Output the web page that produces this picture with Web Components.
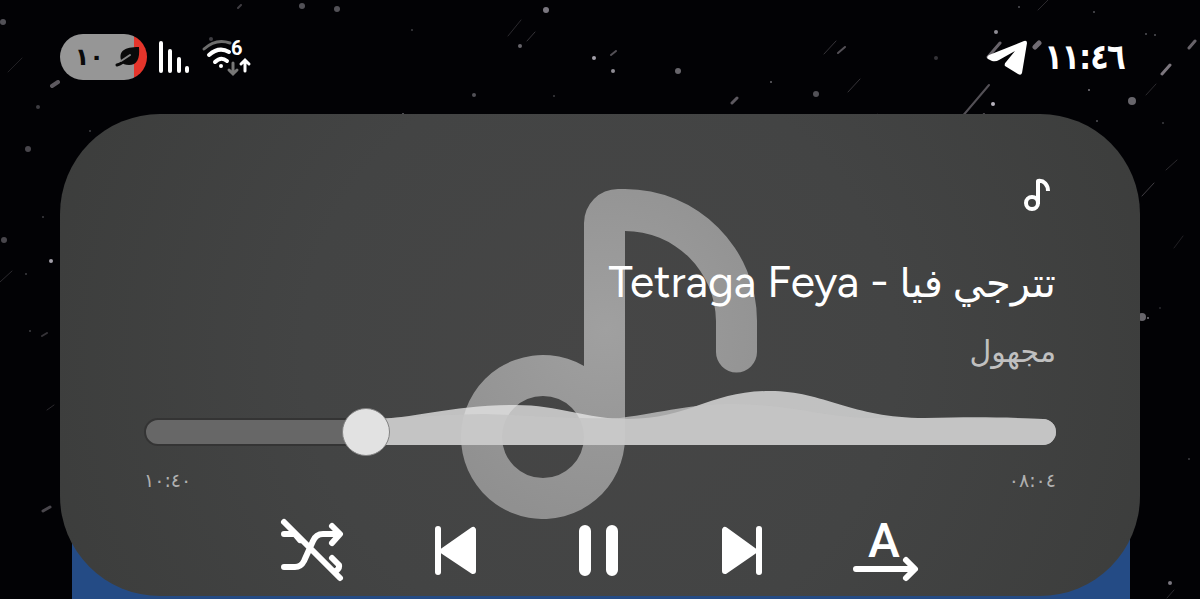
<!DOCTYPE html>
<html lang="ar" dir="rtl">
<head>
<meta charset="utf-8">
<meta name="viewport" content="width=device-width, initial-scale=1">
<title>مشغل الموسيقى</title>
<style>
  body { margin: 0; background: #020205; color: #fff; font-family: Figtree, Roboto, "Noto Sans", "DejaVu Sans", sans-serif; }
</style>
</head>
<body>
<phone-screen>
  <status-bar slot="status" time="١١:٤٦" battery="١٠"></status-bar>
  <media-card>
    <span slot="title"><bdi lang="ar" style="font-size:40px">تترجي فيا</bdi> - <bdi lang="en">Tetraga Feya</bdi></span>
    <span slot="artist">مجهول</span>
    <seek-bar slot="seek" value="484" max="640" elapsed="٠٨:٠٤" total="١٠:٤٠"></seek-bar>
    <transport-controls slot="controls"></transport-controls>
  </media-card>
</phone-screen>

<script>
function define(name, render) {
  customElements.define(name, class extends HTMLElement {
    connectedCallback() {
      if (this.shadowRoot) return;
      this.attachShadow({ mode: "open" }).innerHTML = render(this);
    }
  });
}

const NOTE = "M123 34A34 34 0 0 1 157 0H164A132 132 0 0 1 296 132V163A20.500 20.500 0 0 1 255 163V132A91 91 0 0 0 164 42V248A82 82 0 1 1 123 177ZM82 207A41 41 0 1 0 82 289A41 41 0 1 0 82 207Z";

/* Night sky: dots are [x, y, radius, opacity], trails are [x1, y1, x2, y2, opacity]. */
const DOTS = [[3,22,3,.4],[302,6,3,.4],[337,9,3,.4],[546,10,3,.6],[520,46,2,.5],[594,58,2,.8],[38,107,2,.3],[28,149,3,.35],[4,240,3,.35],[51,261,2,.8],[474,95,2,.4],[403,114,1,.5],[211,39,2,.3],[613,71,2,.7],[678,71,3,.5],[816,94,3,.4],[771,82,1,.5],[936,58,2,.25],[996,32,2,.7],[1019,7,1,.4],[1094,12,1,.4],[1146,34,1,.4],[1155,35,1,.4],[1132,101,4,.5],[993,104,2,.9],[1089,90,1,.6],[1097,121,1,.4],[1163,123,1,.3],[1142,317,4,.5],[1148,318,1,.6],[1170,583,2,.6],[30,331,1,.3],[1189,459,1,.3],[1160,308,1,.2],[90,131,1,.3],[43,217,1,.3],[26,274,1,.3],[412,30,1,.3],[554,96,1,.3]];
/* Trails carry an optional sixth value, the stroke width. */
const TRAILS = [[52,86,58,82,.45,4],[238,8,241,5,.3,2],[460,119,463,115,.35],[170,131,173,128,.3],[508,36,521,20,.2],[527,41,535,32,.25],[594,131,600,124,.4],[0,282,12,271,.2],[8,72,22,58,.15],[611,55,616,51,.4,2],[732,103,737,98,.45,3],[730,131,737,122,.35],[824,54,836,41,.25],[838,53,845,47,.4,2],[848,92,860,79,.25],[870,122,877,114,.2],[988,57,1000,43,.5,3],[1035,47,1039,43,.55,5],[961,118,989,85,.4,2],[968,131,984,114,.4,2],[1189,48,1195,41,.5,3],[1162,74,1170,65,.6,3],[1146,95,1156,84,.2],[1142,196,1154,183,.3],[1166,170,1177,160,.2],[1038,10,1048,0,.2],[43,511,50,507,.35,3],[47,410,54,405,.2],[42,336,47,333,.25,2],[1167,598,1174,590,.2],[1174,248,1183,236,.15]];

define("star-field", () => `
  <style>
    :host { display: block; overflow: hidden; }
    svg { display: block; width: 100%; height: 100%; }
  </style>
  <svg viewBox="0 0 1200 599" preserveAspectRatio="xMidYMin slice" aria-hidden="true" fill="#cbc7d2" stroke-linecap="round">
    ${DOTS.map(([x, y, r, o]) => `<circle cx="${x}" cy="${y}" r="${r}" opacity="${o}"/>`).join("")}
    ${TRAILS.map(([a, b, c, d, o, w = 1]) => `<path d="M${a} ${b}L${c} ${d}" stroke="#cdc4cf" stroke-width="${w}" opacity="${o}"/>`).join("")}
  </svg>`);

define("phone-screen", () => `
  <style>
    :host { display: block; position: relative; min-height: 100vh; overflow: hidden; }
    star-field { position: absolute; inset: 0; }
    .page { position: absolute; inset: 530px 70px 0 72px; background: #244b85; }
    .content { position: relative; }
  </style>
  <star-field></star-field>
  <div class="page"></div>
  <div class="content"><slot name="status"></slot><main><slot></slot></main></div>`);

define("status-bar", el => `
  <style>
    :host { display: flex; justify-content: space-between; align-items: center; height: 114px; padding: 0 75px 0 60px; box-sizing: border-box; }
    .group { display: flex; align-items: center; }
    .start { gap: 16px; }
    .end { gap: 12px; direction: ltr; }
    svg { display: block; overflow: visible; }
    time { font: 32px/40px "DejaVu Sans", sans-serif; -webkit-text-stroke: 2px #fff; }
    .battery { display: flex; align-items: center; justify-content: flex-end; gap: 12px; box-sizing: border-box; width: 87px; height: 46px; padding-right: 7px; border-radius: 23px; color: #0a0a0a; background: linear-gradient(to right, #969696 74px, #e5352b 74px); font: 700 24px/32px "DejaVu Sans", sans-serif; }
    text { font: 700 20px Roboto, sans-serif; }
  </style>
  <div class="group start">
    <time>${el.getAttribute("time")}</time>
    <svg width="42" height="36" viewBox="986 40 42 36" fill="#fff" role="img" aria-label="Telegram"><path d="M988 56L1023 42Q1026 41 1026 44L1021 74Q1020 77 1017 75L1004 67Q1003 65 1005 63L1014 52L998 61Q995 63 991 62L987 60Q985 58 988 56Z"/></svg>
  </div>
  <div class="group end">
    <div class="battery"><span>${el.getAttribute("battery")}</span>
      <svg width="24" height="22" viewBox="0 0 24 22" aria-hidden="true"><path d="M5 14C3 5 8 1 23 1C24 13 21 19 13 19C9 19 7 18 5 16Z" fill="#0a0a0a"/><path d="M1 19Q6 18 13 10" fill="none" stroke="#0a0a0a" stroke-width="3" stroke-linecap="round"/><path d="M5 15L14 9" fill="none" stroke="#858585" stroke-width="2" stroke-linecap="round"/></svg>
    </div>
    <svg width="31" height="34" viewBox="0 0 31 34" stroke="#fff" stroke-width="4" stroke-linecap="round" aria-hidden="true"><path d="M2 3V31M11 11V31M20 19V31M28 28V31"/></svg>
    <svg width="50" height="38" viewBox="202 37 50 38" fill="none" stroke="#fff" stroke-width="3" stroke-linecap="round" aria-hidden="true">
      <path d="M204 48Q216 37 230 42" stroke="#6d6d6d"/><path d="M209 54Q219 45 229 51M215 61Q221 55 227 60" stroke-width="4"/><circle cx="221" cy="65" r="2" fill="#fff" stroke="none"/>
      <path d="M233 62V72M229 69L233 73L237 69" stroke="#777"/><path d="M245 70V60M241 63L245 59L249 63"/>
      <text x="231" y="54" direction="ltr" fill="#fff" stroke="none">6</text>
    </svg>
  </div>`);

define("media-card", () => `
  <style>
    :host { display: block; position: relative; margin: 0 60px; border-radius: 100px; overflow: hidden; background: radial-gradient(circle at 50% 50%, #464646, #434444 50%, #3c3d3c 100%); }
    .art { position: absolute; inset: 0 0 2px; display: grid; place-items: center; direction: ltr; }
    .art svg { display: block; }
    article { position: relative; display: flex; flex-direction: column; padding: 64px 84px 12px; }
    .app { display: block; margin-right: 6px; }
    h1, p { margin: 0; font-weight: 400; }
    h1 { margin-top: 38px; font-size: 44px; line-height: 64px; }
    p { margin-top: 13px; font: 30px/48px "DejaVu Sans", sans-serif; color: #c0c0c0; }
  </style>
  <div class="art"><svg width="332" height="330" viewBox="-27 0 332 330" aria-hidden="true">
    <defs><radialGradient id="g" gradientUnits="userSpaceOnUse" cx="145" cy="140" r="200"><stop offset="0" stop-color="#a0a0a0"/><stop offset="1" stop-color="#909090"/></radialGradient></defs>
    <path d="${NOTE}" fill="url(#g)" fill-rule="evenodd"/></svg></div>
  <article>
    <svg class="app" width="26" height="34" viewBox="0 0 26 34" fill="none" stroke="#fff" stroke-width="4" stroke-linejoin="round" aria-hidden="true"><circle cx="8" cy="25" r="6"/><path d="M14 26V3C20 2 24 7 24 13"/></svg>
    <h1><slot name="title"></slot></h1>
    <p><slot name="artist"></slot></p>
    <slot name="seek"></slot>
    <slot name="controls"></slot>
  </article>`);

define("seek-bar", el => `
  <style>
    :host { display: block; }
    .bar { display: grid; height: 72px; margin-top: 8px; }
    .bar > * { grid-area: 1 / 1; }
    svg { display: block; width: 100%; height: 72px; }
    input { -webkit-appearance: none; appearance: none; margin: 24px -24px 0; height: 48px; background: none; }
    input::-webkit-slider-thumb { -webkit-appearance: none; width: 48px; height: 48px; border-radius: 50%; border: 1px solid #828282; background: #e2e2e2; box-sizing: border-box; }
    .times { display: flex; justify-content: space-between; font: 19px/24px "DejaVu Sans", sans-serif; color: #b0b0b0; margin-top: 12px; }
  </style>
  <div class="bar">
    <svg viewBox="144 384 912 72" preserveAspectRatio="none" aria-hidden="true">
      <path d="M367 419H158A13 13 0 0 0 158 445H367Z" fill="#676767" stroke="#343434" stroke-width="2"/>
      <path d="M367 419C410 420 450 405 515 405C560 405 585 419 628 419C690 419 710 391 770 391C825 391 850 418 925 418C970 417 1000 417 1043 419A13 13 0 0 1 1043 445H367Z" fill="#e7e7e7" fill-opacity=".765"/>
      <path d="M367 419C410 418 450 414 485 414C540 416 580 419 620 418C665 412 690 404 735 404C800 405 820 418 880 418C960 418 1000 418 1043 419A13 13 0 0 1 1043 445H367Z" fill="#c5c5c5" fill-opacity=".79"/>
    </svg>
    <input type="range" dir="rtl" min="0" max="${el.getAttribute("max")}" value="${el.getAttribute("value")}" aria-label="موضع التشغيل">
  </div>
  <div class="times"><span>${el.getAttribute("elapsed")}</span><span>${el.getAttribute("total")}</span></div>`);

define("transport-controls", () => `
  <style>
    :host { display: flex; justify-content: center; direction: ltr; margin-top: 24px; }
    button { width: 143px; height: 68px; padding: 0; border: 0; background: none; display: grid; place-items: center; color: #fff; }
    svg { display: block; width: 68px; height: 68px; overflow: visible; fill: none; stroke: currentColor; stroke-width: 6; stroke-linecap: round; stroke-linejoin: round; }
    .solid { fill: currentColor; }
    .bars { stroke-width: 12; }
    text { font: 500 48px Roboto, sans-serif; fill: currentColor; stroke: none; }
  </style>
  <button aria-label="خلط"><svg viewBox="280 516 68 68"><path d="M284 522L340 578M284 534H295L300 540M284 567H295Q301 567 304 561L313 541Q316 534 323 534H338M332 526L340 534L332 543M332 558L339 565Q340 568 336 571"/></svg></button>
  <button aria-label="السابق"><svg viewBox="423 516 68 68"><path d="M438 529V572"/><path class="solid" d="M473 530V571L443 551Z"/></svg></button>
  <button aria-label="إيقاف مؤقت"><svg viewBox="566 516 68 68"><path class="bars" d="M585 531V570M612 531V570"/></svg></button>
  <button aria-label="التالي"><svg viewBox="709 516 68 68"><path d="M759 529V572"/><path class="solid" d="M725 530V571L754 551Z"/></svg></button>
  <button aria-label="ترتيب"><svg viewBox="852 516 68 68"><path d="M856 569H914M906 560L915 569L906 578"/><text x="884" y="557" text-anchor="middle">A</text></svg></button>`);
</script>
</body>
</html>
